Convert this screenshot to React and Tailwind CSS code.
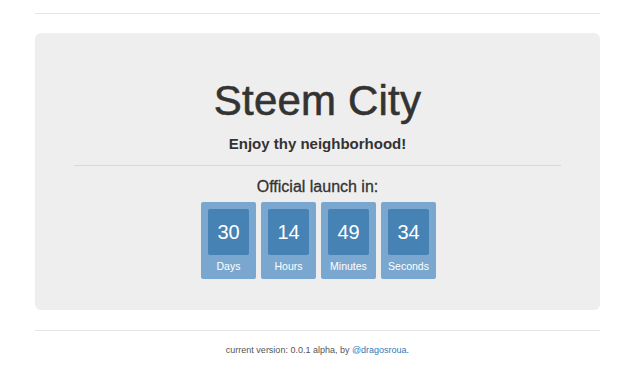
export default function App() {
  const items = [
    ["30", "Days"],
    ["14", "Hours"],
    ["49", "Minutes"],
    ["34", "Seconds"],
  ];
  return (
    <div className="min-h-[381px] bg-white text-[#333] font-['Liberation_Sans',Arial,sans-serif]">
      <div className="pt-[13px]">
        <div className="mx-[35px] w-[565px] border-t border-[#e5e5e5]" />
      </div>
      <div className="mx-[35px] mt-[19px] w-[565px] rounded-[6px] bg-[#eeeeee] pt-[45px] pb-[31px] text-center">
        <h1 className="text-[42px] leading-[46px] tracking-[0.2px] [-webkit-text-stroke:0.6px_#333]">Steem City</h1>
        <p className="mt-[10px] text-[15px] leading-[20px] font-bold">Enjoy thy neighborhood!</p>
        <div className="mx-[39px] mt-[11px] border-t border-[#d8d8d8]" />
        <p className="mt-[11px] text-[16px] leading-[20px] [-webkit-text-stroke:0.3px_#333]">Official launch in:</p>
        <div className="mt-[5px] flex justify-center gap-[5px] pl-[2px]">
          {items.map(([n, l]) => (
            <div key={l} className="flex h-[77px] w-[55px] flex-col items-center rounded-[2px] bg-[#7aa7cf] pt-[7px]">
              <div className="flex h-[46px] w-[41px] items-center justify-center rounded-[2px] bg-[#4682b4] text-[20px] text-white">
                {n}
              </div>
              <div className="mt-[2px] text-[10.5px] leading-[18px] text-white">{l}</div>
            </div>
          ))}
        </div>
      </div>
      <div className="mx-[35px] mt-[20px] w-[565px] border-t border-[#e5e5e5] pt-[11px] text-center text-[9px] leading-[16px] text-[#555]">
        current version: 0.0.1 alpha, by <span className="text-[#337ab7]">@dragosroua</span>.
      </div>
    </div>
  );
}
